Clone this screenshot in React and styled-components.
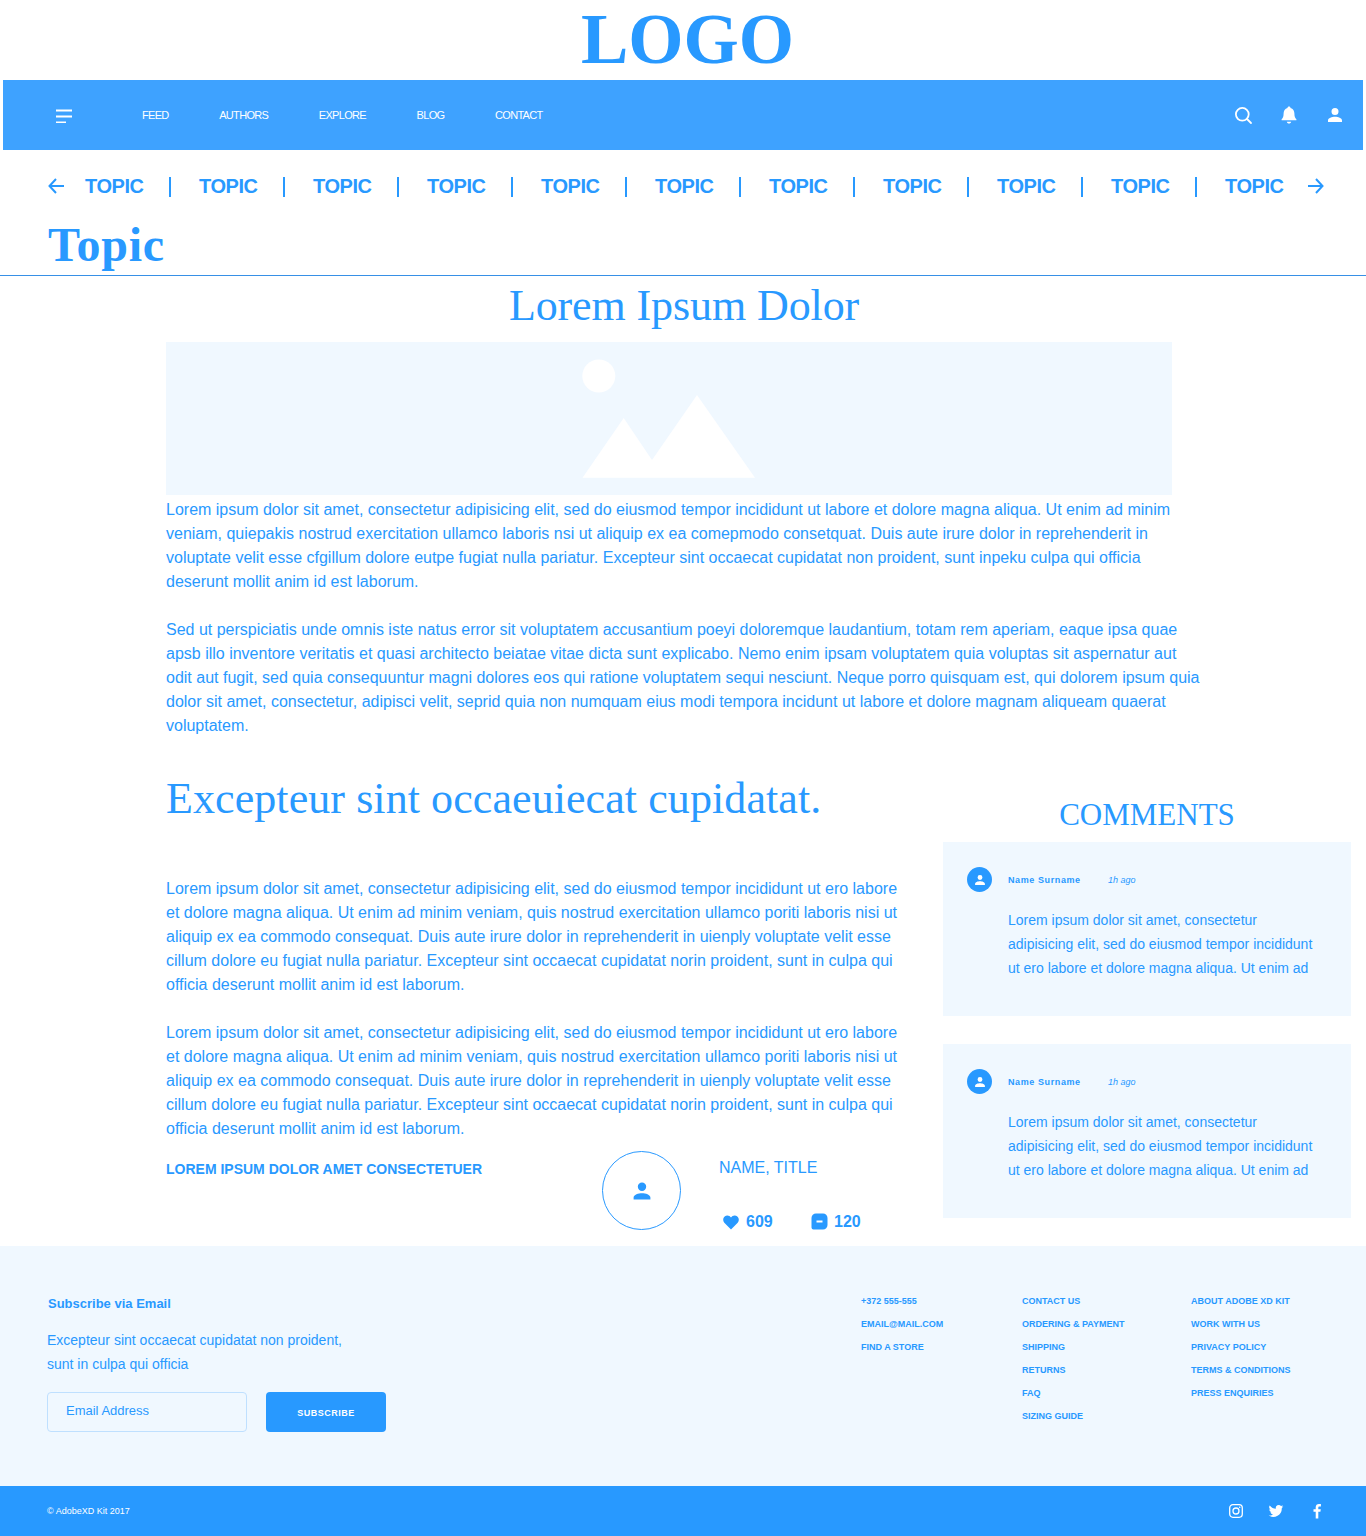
import React from "react";
import styled, { createGlobalStyle } from "styled-components";

const BLUE = "#2899ff";
const LIGHT = "#f0f8ff";
const SERIF = '"Liberation Serif", "Times New Roman", serif';

const Global = createGlobalStyle`
  html, body { margin: 0; padding: 0; background: #fff; }
  body { font-family: "Liberation Sans", Arial, sans-serif; color: ${BLUE}; width: 1366px; }
  * { box-sizing: border-box; }
  p, h1, h2, h3 { margin: 0; }
`;

const Page = styled.div`width: 1366px; height: 1536px; overflow: hidden; display: flex; flex-direction: column;`;

const LogoBar = styled.header`height: 80px; display: flex; align-items: flex-start; justify-content: center; padding-left: 9px;`;
const Logo = styled.div`font-family: ${SERIF}; font-weight: 700; font-size: 71px; line-height: 78px;`;

const Nav = styled.nav`
  margin: 0 3px; height: 70px; background: #3ea2ff; color: #fff;
  display: flex; align-items: center; padding: 0 18px 0 53px;
`;
const Burger = styled.svg`width: 16px; height: 16px; margin-right: 70px; display: block; flex: none;`;
const NavLinks = styled.div`display: flex; gap: 50.7px;`;
const NavLink = styled.a`font-size: 11px; letter-spacing: -0.7px; line-height: 14px; text-transform: uppercase;`;
const NavIcons = styled.div`margin-left: auto; display: flex; gap: 26px; align-items: center;`;
const NavIcon = styled.svg`width: 20px; height: 20px; display: block; fill: #fff;`;

const TopicBar = styled.div`height: 72px; display: flex; align-items: center; padding: 0 0 0 48px;`;
const Arrow = styled.svg`width: 16px; height: 16px; flex: none; display: block;`;
const TopicList = styled.div`display: flex; align-items: center; margin: 0 24px 0 21px;`;
const TopicName = styled.span`font-size: 20px; font-weight: 700; letter-spacing: -0.45px; line-height: 24px; width: 59px; white-space: nowrap;`;
const Sep = styled.i`display: block; width: 2px; height: 20px; background: ${BLUE}; margin: 2px 28.5px 0 24.5px;`;

const TopicTitle = styled.h1`
  font-family: ${SERIF}; font-weight: 700; font-size: 48px; line-height: 46px; height: 54px; letter-spacing: 0.8px;
  padding-left: 48px; border-bottom: 1px solid #3790e6;
`;

const Article = styled.article`padding: 0 0 0 166px; flex: 1;`;
const Title = styled.h2`
  font-family: ${SERIF}; font-weight: 400; font-size: 44px; line-height: 60px; text-align: center;
  width: 1036px; letter-spacing: -0.1px;
`;
const Hero = styled.div`width: 1006px; height: 153px; margin-top: 6px; background: ${LIGHT}; display: flex; justify-content: center;`;
const HeroIcon = styled.svg`width: 1006px; height: 153px; display: block;`;
const Body = styled.p`font-size: 16px; line-height: 24px;`;
const Intro = styled.div`width: 1036px; display: flex; flex-direction: column; gap: 24px; margin-top: 3px;`;

const Columns = styled.div`display: flex; margin-top: 31px;`;
const Left = styled.div`width: 777px; flex: none;`;
const Heading = styled.h2`font-family: ${SERIF}; font-weight: 400; font-size: 44px; line-height: 60px; height: 108px; letter-spacing: 0.08px;`;
const LeftText = styled.div`width: 740px; display: flex; flex-direction: column; gap: 24px;`;
const Byline = styled.div`display: flex; align-items: flex-start; margin-top: 10px;`;
const Lead = styled.div`width: 436px; font-size: 14px; font-weight: 700; line-height: 20px; margin-top: 8px; flex: none; white-space: nowrap;`;
const Avatar = styled.div`width: 79px; height: 79px; border: 1px solid ${BLUE}; border-radius: 50%; display: flex; align-items: center; justify-content: center; flex: none;`;
const Author = styled.div`margin-left: 38px;`;
const AuthorName = styled.div`font-size: 16px; line-height: 20px; margin-top: 7px;`;
const Stats = styled.div`display: flex; align-items: center; margin-top: 34px; margin-left: 4px;`;
const Stat = styled.div`display: flex; align-items: center; gap: ${p => p.$gap}px; font-size: 16px; font-weight: 700; line-height: 20px; width: 88px;`;
const HeartIcon = styled.svg`width: 16px; height: 16px; display: block; fill: ${BLUE};`;
const ChatIcon = styled.svg`width: 17px; height: 17px; display: block; margin-top: -2px;`;

const Right = styled.aside`width: 408px; flex: none;`;
const CommentsTitle = styled.h3`font-family: ${SERIF}; font-weight: 400; font-size: 31px; line-height: 40px; text-align: center; margin-top: 18px; height: 55px; padding-top: 8px;`;
const Comment = styled.div`background: ${LIGHT}; height: 174px; padding: 25px 0 0 24px; display: flex; gap: 16px; & + & { margin-top: 28px; }`;
const CommentAvatar = styled.div`width: 25px; height: 25px; border-radius: 50%; background: ${BLUE}; display: flex; align-items: center; justify-content: center; flex: none;`;
const CommentMain = styled.div`width: 310px;`;
const CommentHead = styled.div`display: flex; align-items: center; height: 25px; font-size: 9px; line-height: 12px;`;
const CommentName = styled.span`font-weight: 700; width: 100px; letter-spacing: 0.6px;`;
const CommentTime = styled.span`font-style: italic;`;
const CommentText = styled.p`font-size: 14px; line-height: 24px; margin-top: 16px; white-space: pre-line;`;

const FooterTop = styled.footer`height: 240px; background: ${LIGHT}; display: flex; padding: 48px 0 0 47px;`;
const Subscribe = styled.div`width: 814px; flex: none;`;
const SubTitle = styled.div`font-size: 13px; font-weight: 700; line-height: 18px; padding: 1px 0 0 1px; margin-bottom: -1px;`;
const SubText = styled.p`font-size: 14px; line-height: 24px; margin-top: 16px; white-space: pre-line;`;
const SubForm = styled.div`display: flex; gap: 19px; margin-top: 16px;`;
const Input = styled.div`width: 200px; height: 40px; border: 1px solid #bfe0ff; border-radius: 4px; padding: 9px 0 0 18px; font-size: 13px; line-height: 17px;`;
const SubButton = styled.button`width: 120px; height: 40px; border: 0; border-radius: 4px; background: ${BLUE}; color: #fff; font: 700 9px "Liberation Sans", Arial, sans-serif; letter-spacing: 0.5px; padding: 1px 0 0;`;
const LinkCols = styled.div`display: flex; padding-top: 1px;`;
const LinkCol = styled.ul`list-style: none; margin: 0; padding: 0; width: ${p => p.$w}px; display: flex; flex-direction: column; gap: 11px;`;
const LinkItem = styled.li`font-size: 9px; font-weight: 700; line-height: 12px; white-space: nowrap;`;

const FooterBar = styled.div`height: 50px; background: ${BLUE}; color: #fff; display: flex; align-items: center; padding: 0 41.5px 0 47px;`;
const Copy = styled.div`font-size: 9px; line-height: 12px;`;
const Social = styled.div`margin-left: auto; display: flex; gap: 24.5px; align-items: center;`;
const SocialIcon = styled.svg`width: 16px; height: 16px; display: block; fill: #fff;`;
const PersonIcon = styled.svg`display: block; width: ${p => p.$size}px; height: ${p => p.$size}px; fill: ${p => p.$color};`;

const PERSON = "M12 12a4.2 4.2 0 1 0 0-8.4A4.2 4.2 0 0 0 12 12Zm0 2.2c-3.6 0-8.4 1.5-8.4 4.3v1.9h16.8v-1.9c0-2.8-4.8-4.3-8.4-4.3Z";
const Person = ({ size, color }) => (
  <PersonIcon $size={size} $color={color} viewBox="0 0 24 24"><path d={PERSON} /></PersonIcon>
);

const P1 = "Lorem ipsum dolor sit amet, consectetur adipisicing elit, sed do eiusmod tempor incididunt ut labore et dolore magna aliqua. Ut enim ad minim veniam, quiepakis nostrud exercitation ullamco laboris nsi ut aliquip ex ea comepmodo consetquat. Duis aute irure dolor in reprehenderit in voluptate velit esse cfgillum dolore eutpe fugiat nulla pariatur. Excepteur sint occaecat cupidatat non proident, sunt inpeku culpa qui officia deserunt mollit anim id est laborum.";
const P2 = "Sed ut perspiciatis unde omnis iste natus error sit voluptatem accusantium poeyi doloremque laudantium, totam rem aperiam, eaque ipsa quae apsb illo inventore veritatis et quasi architecto beiatae vitae dicta sunt explicabo. Nemo enim ipsam voluptatem quia voluptas sit aspernatur aut odit aut fugit, sed quia consequuntur magni dolores eos qui ratione voluptatem sequi nesciunt. Neque porro quisquam est, qui dolorem ipsum quia dolor sit amet, consectetur, adipisci velit, seprid quia non numquam eius modi tempora incidunt ut labore et dolore magnam aliqueam quaerat voluptatem.";
const P3 = "Lorem ipsum dolor sit amet, consectetur adipisicing elit, sed do eiusmod tempor incididunt ut ero labore et dolore magna aliqua. Ut enim ad minim veniam, quis nostrud exercitation ullamco poriti laboris nisi ut aliquip ex ea commodo consequat. Duis aute irure dolor in reprehenderit in uienply voluptate velit esse cillum dolore eu fugiat nulla pariatur. Excepteur sint occaecat cupidatat norin proident, sunt in culpa qui officia deserunt mollit anim id est laborum.";
const CT = "Lorem ipsum dolor sit amet, consectetur\nadipisicing elit, sed do eiusmod tempor incididunt\nut ero labore et dolore magna aliqua. Ut enim ad";

const COLS = [
  { w: 161, items: ["+372 555-555", "EMAIL@MAIL.COM", "FIND A STORE"] },
  { w: 169, items: ["CONTACT US", "ORDERING & PAYMENT", "SHIPPING", "RETURNS", "FAQ", "SIZING GUIDE"] },
  { w: 150, items: ["ABOUT ADOBE XD KIT", "WORK WITH US", "PRIVACY POLICY", "TERMS & CONDITIONS", "PRESS ENQUIRIES"] },
];

export default function App() {
  return (
    <Page>
      <Global />
      <LogoBar><Logo>LOGO</Logo></LogoBar>
      <Nav>
        <Burger viewBox="0 0 16 16">
          <rect x="0" y="2.500" width="16" height="2" fill="#fff" />
          <rect x="0" y="8.500" width="16" height="2" fill="#fff" />
          <rect x="0" y="14.500" width="10" height="2" fill="#fff" />
        </Burger>
        <NavLinks>
          {["Feed", "Authors", "Explore", "Blog", "Contact"].map(n => <NavLink key={n}>{n}</NavLink>)}
        </NavLinks>
        <NavIcons>
          <NavIcon viewBox="0 0 20 20"><circle cx="9.300" cy="9.300" r="6.400" fill="none" stroke="#fff" strokeWidth="1.800" /><path d="M14 14l4 4" stroke="#fff" strokeWidth="1.800" strokeLinecap="round" fill="none" /></NavIcon>
          <NavIcon viewBox="0 0 20 20"><path d="M10 1.500c.9 0 1.500.6 1.500 1.400 2.600.7 3.900 2.800 3.900 5.600 0 3 .6 4.300 2 5.800v1H2.600v-1c1.400-1.500 2-2.800 2-5.800 0-2.800 1.300-4.900 3.900-5.600 0-.8.6-1.400 1.500-1.400ZM7.800 16.800h4.400c-.2 1.100-1.100 1.800-2.200 1.800s-2-.7-2.200-1.800Z" /></NavIcon>
          <NavIcon viewBox="0 0 24 24"><path d={PERSON} /></NavIcon>
        </NavIcons>
      </Nav>

      <TopicBar>
        <Arrow viewBox="0 0 16 16" fill="none" stroke={BLUE} strokeWidth="2"><path d="M16 8H1.500M8 1 1.500 8 8 15" /></Arrow>
        <TopicList>
          {Array.from({ length: 11 }).map((_, i) => (
            <React.Fragment key={i}>
              <TopicName>TOPIC</TopicName>
              {i < 10 && <Sep />}
            </React.Fragment>
          ))}
        </TopicList>
        <Arrow viewBox="0 0 16 16" fill="none" stroke={BLUE} strokeWidth="2"><path d="M0 8h14.500M8 1l6.500 7L8 15" /></Arrow>
      </TopicBar>
      <TopicTitle>Topic</TopicTitle>

      <Article>
        <Title>Lorem Ipsum Dolor</Title>
        <Hero>
          <HeroIcon viewBox="0 0 1006 153">
            <circle cx="432.800" cy="34" r="16.500" fill="#fff" />
            <path d="M416.500 135.700 457.700 76 486 118 531 53 589 135.700Z" fill="#fff" />
          </HeroIcon>
        </Hero>
        <Intro>
          <Body>{P1}</Body>
          <Body>{P2}</Body>
        </Intro>
        <Columns>
          <Left>
            <Heading>Excepteur sint occaeuiecat cupidatat.</Heading>
            <LeftText>
              <Body>{P3}</Body>
              <Body>{P3}</Body>
            </LeftText>
            <Byline>
              <Lead>LOREM IPSUM DOLOR AMET CONSECTETUER</Lead>
              <Avatar><Person size={24} color={BLUE} /></Avatar>
              <Author>
                <AuthorName>NAME, TITLE</AuthorName>
                <Stats>
                  <Stat $gap={7}>
                    <HeartIcon viewBox="0 0 16 16"><path d="M8 15.500 1.300 8.800C-.9 6.500.2 1.800 4 1.500c1.800-.1 3.100.8 4 2.100.9-1.300 2.200-2.200 4-2.100 3.800.3 4.900 5 2.700 7.300Z" /></HeartIcon>
                    609
                  </Stat>
                  <Stat $gap={6}>
                    <ChatIcon viewBox="0 0 17 17"><path d="M5 .5h7A4.500 4.500 0 0 1 16.500 5v7a4.500 4.500 0 0 1-4.500 4.500H2.500a2 2 0 0 1-2-2V5A4.500 4.500 0 0 1 5 .5Z" fill={BLUE} /><rect x="5.500" y="7.500" width="6" height="2" fill="#fff" /></ChatIcon>
                    120
                  </Stat>
                </Stats>
              </Author>
            </Byline>
          </Left>
          <Right>
            <CommentsTitle>COMMENTS</CommentsTitle>
            {[0, 1].map(i => (
              <Comment key={i}>
                <CommentAvatar><Person size={14} color="#fff" /></CommentAvatar>
                <CommentMain>
                  <CommentHead>
                    <CommentName>Name Surname</CommentName>
                    <CommentTime>1h ago</CommentTime>
                  </CommentHead>
                  <CommentText>{CT}</CommentText>
                </CommentMain>
              </Comment>
            ))}
          </Right>
        </Columns>
      </Article>

      <FooterTop>
        <Subscribe>
          <SubTitle>Subscribe via Email</SubTitle>
          <SubText>{"Excepteur sint occaecat cupidatat non proident,\nsunt in culpa qui officia"}</SubText>
          <SubForm>
            <Input>Email Address</Input>
            <SubButton>SUBSCRIBE</SubButton>
          </SubForm>
        </Subscribe>
        <LinkCols>
          {COLS.map((c, i) => (
            <LinkCol key={i} $w={c.w}>
              {c.items.map(t => <LinkItem key={t}>{t}</LinkItem>)}
            </LinkCol>
          ))}
        </LinkCols>
      </FooterTop>
      <FooterBar>
        <Copy>© AdobeXD Kit 2017</Copy>
        <Social>
          <SocialIcon viewBox="0 0 16 16"><rect x="1.700" y="1.700" width="12.600" height="12.600" rx="3.200" fill="none" stroke="#fff" strokeWidth="1.300" /><circle cx="8" cy="8" r="3" fill="none" stroke="#fff" strokeWidth="1.300" /><circle cx="11.700" cy="4.300" r=".8" /></SocialIcon>
          <SocialIcon viewBox="0 0 24 24"><path d="M23 5.100c-.8.400-1.700.6-2.600.7.900-.6 1.600-1.400 2-2.500-.9.500-1.800.9-2.900 1.100a4.500 4.500 0 0 0-7.700 4.100C8 8.300 4.700 6.500 2.500 3.800a4.500 4.500 0 0 0 1.400 6c-.7 0-1.400-.2-2-.6 0 2.200 1.500 4.100 3.600 4.500-.7.200-1.400.2-2 .1.600 1.800 2.200 3.100 4.200 3.100A9 9 0 0 1 1 18.800 12.800 12.800 0 0 0 20.700 7.400c.9-.6 1.700-1.400 2.300-2.300Z" /></SocialIcon>
          <SocialIcon viewBox="0 0 16 16"><path d="M9.300 15.500V8.800h2.100l.4-2.600H9.300V4.700c0-.8.300-1.300 1.300-1.300h1.300V1.100C11.600 1 10.900.9 10 .9 8 .9 6.700 2.100 6.700 4.300v1.900H4.500v2.600h2.200v6.700Z" /></SocialIcon>
        </Social>
      </FooterBar>
    </Page>
  );
}
